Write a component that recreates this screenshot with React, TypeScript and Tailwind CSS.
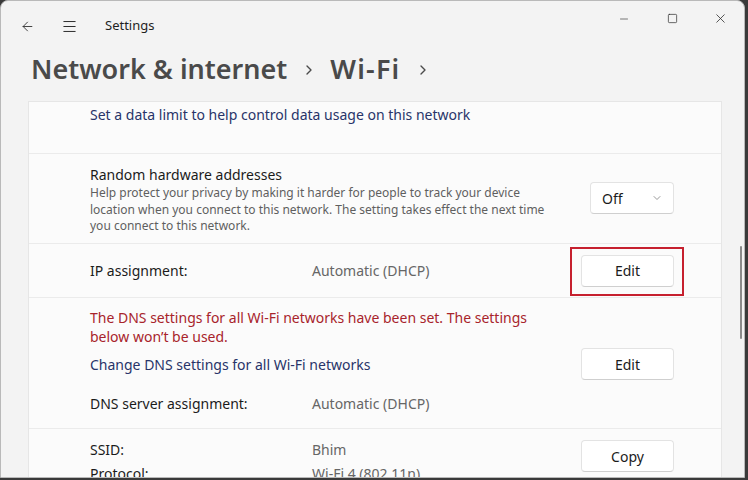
import { ArrowLeft, Menu, Minus, Square, X, ChevronRight, ChevronDown } from "lucide-react";

const font = { fontFamily: '"Segoe UI", "Noto Sans", "Open Sans", sans-serif' };

const Btn = ({ label }: { label: string }) => (
  <div className="w-[93px] h-[32px] flex items-center justify-center rounded-[4px] bg-white border border-[#e3e3e3] border-b-[#cfcfcf] text-[14px] text-[#1b1b1b]">
    {label}
  </div>
);

const App = () => {
  return (
    <div style={font} className="w-[748px] h-[480px] overflow-hidden bg-[#3a3a3a]">
      <div className="w-[745px] h-[478px] bg-[#f3f3f3] rounded-t-lg border border-[#b9b9b9] relative flex flex-col overflow-hidden">
        {/* title bar */}
        <div className="h-[50px] flex items-center shrink-0">
          <ArrowLeft className="ml-[19px] w-[15px] h-[15px] text-[#2b2b2b]" strokeWidth={1.4} />
          <Menu className="ml-[26px] w-[17px] h-[17px] text-[#2b2b2b]" strokeWidth={1.4} />
          <span className="ml-[27px] text-[13px] text-[#1f1f1f]">Settings</span>
          <div className="ml-auto flex items-center self-start mt-[10px]">
            <div className="w-[48px] flex justify-center"><Minus className="w-[12px] h-[12px] text-[#333]" strokeWidth={1.3} /></div>
            <div className="w-[48px] flex justify-center"><Square className="w-[11px] h-[11px] text-[#333]" strokeWidth={1.6} /></div>
            <div className="w-[48px] flex justify-center"><X className="w-[15px] h-[15px] text-[#333]" strokeWidth={1.3} /></div>
          </div>
        </div>

        {/* breadcrumb */}
        <div className="h-[50px] flex items-start pt-[1px] pl-[30px] shrink-0 text-[#4a4a4a]">
          <span className="text-[27px] leading-[34px] font-semibold">Network &amp; internet</span>
          <ChevronRight className="ml-[14px] mt-[10px] w-[16px] h-[16px]" strokeWidth={2} />
          <span className="ml-[13px] text-[27px] leading-[34px] font-semibold tracking-[1.2px]">Wi-Fi</span>
          <ChevronRight className="ml-[15px] mt-[10px] w-[16px] h-[16px]" strokeWidth={2} />
        </div>

        <div className="flex pl-[27px] flex-1">
          <div className="w-[694px] bg-[#fbfbfb] border border-[#e6e6e6] flex flex-col">
            {/* data limit */}
            <div className="h-[52px] pl-[61px] pt-[3px] border-b border-[#ebebeb]">
              <div className="text-[14px] leading-[20px] text-[#283469]">Set a data limit to help control data usage on this network</div>
            </div>

            {/* random hardware */}
            <div className="h-[90px] pl-[61px] pr-[47px] flex items-start border-b border-[#ebebeb]">
              <div className="flex-1 pt-[11px]">
                <div className="text-[14px] leading-[20px] text-[#1b1b1b]">Random hardware addresses</div>
                <div className="text-[12px] leading-[16.5px] text-[#5f5f5f] w-[470px]">
                  Help protect your privacy by making it harder for people to track your device location when you connect to this network. The setting takes effect the next time you connect to this network.
                </div>
              </div>
              <div className="mt-[28px] w-[84px] h-[32px] rounded-[4px] bg-white border border-[#e3e3e3] border-b-[#cfcfcf] flex items-center justify-between pl-[11px] pr-[10px]">
                <span className="text-[14px] text-[#1b1b1b]">Off</span>
                <ChevronDown className="w-[12px] h-[12px] text-[#777]" strokeWidth={1.5} />
              </div>
            </div>

            {/* IP assignment */}
            <div className="h-[54px] pl-[61px] pr-[47px] flex items-center border-b border-[#ebebeb]">
              <span className="w-[222px] text-[14px] text-[#1b1b1b]">IP assignment:</span>
              <span className="flex-1 text-[14px] text-[#666]">Automatic (DHCP)</span>
              <div className="relative">
                <Btn label="Edit" />
                <div className="absolute -left-[11px] -top-[8px] w-[114px] h-[49px] border-2 border-[#c6202e]" />
              </div>
            </div>

            {/* DNS */}
            <div className="h-[131px] pl-[61px] pr-[47px] pt-[10px] border-b border-[#ebebeb] flex flex-col">
              <div className="text-[14px] leading-[19px] text-[#a8242b] w-[470px]">
                The DNS settings for all Wi-Fi networks have been set. The settings below won’t be used.
              </div>
              <div className="flex items-center mt-[2px]">
                <span className="flex-1 text-[14px] text-[#283469]">Change DNS settings for all Wi-Fi networks</span>
                <Btn label="Edit" />
              </div>
              <div className="flex items-center mt-[13px]">
                <span className="w-[222px] text-[14px] text-[#1b1b1b]">DNS server assignment:</span>
                <span className="text-[14px] text-[#666]">Automatic (DHCP)</span>
              </div>
            </div>

            {/* SSID */}
            <div className="pl-[61px] pr-[47px] pt-[11px] flex">
              <div className="flex-1 flex flex-col">
                <div className="flex">
                  <span className="w-[222px] text-[14px] leading-[20px] text-[#1b1b1b]">SSID:</span>
                  <span className="text-[14px] leading-[20px] text-[#666]">Bhim</span>
                </div>
                <div className="flex mt-[4px]">
                  <span className="w-[222px] text-[14px] leading-[20px] text-[#1b1b1b]">Protocol:</span>
                  <span className="text-[14px] leading-[20px] text-[#666]">Wi-Fi 4 (802.11n)</span>
                </div>
              </div>
              <Btn label="Copy" />
            </div>
          </div>
          {/* scrollbar */}
          <div className="ml-auto mr-[2px] mt-[145px] w-[2px] h-[93px] rounded-full bg-[#8a8a8a]" />
        </div>
      </div>
    </div>
  );
};

export default App;
